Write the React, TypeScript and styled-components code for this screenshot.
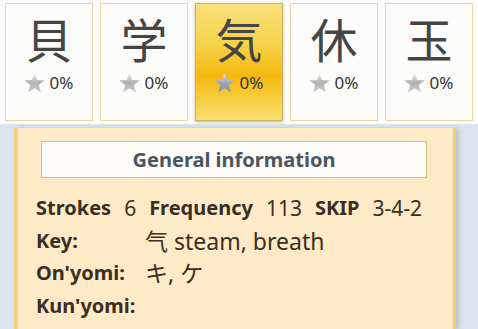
import React from 'react';
import styled, { createGlobalStyle } from 'styled-components';

// -- global --
const GlobalStyle = createGlobalStyle`
  html, body {
    margin: 0;
    padding: 0;
    background: #dbe5ef;
    font-family: "Noto Sans", "Noto Sans CJK JP", sans-serif;
    overflow: hidden;
  }
`;

type KanjiItem = { kanji: string; pct: string; selected?: boolean };

const kanjis: KanjiItem[] = [
  { kanji: '貝', pct: '0%' },
  { kanji: '学', pct: '0%' },
  { kanji: '気', pct: '0%', selected: true },
  { kanji: '休', pct: '0%' },
  { kanji: '玉', pct: '0%' },
];

const Star: React.FC<{ selected?: boolean; id: string }> = ({ selected, id }) => (
  <svg width="23" height="22" viewBox="0 0 24 23">
    <defs>
      <linearGradient id={id} x1="0" y1="0" x2="0" y2="1">
        <stop offset="0" stopColor={selected ? '#e8e8ee' : '#f2f2f2'} />
        <stop offset="0.5" stopColor={selected ? '#a0a4b4' : '#b2b2b2'} />
        <stop offset="1" stopColor={selected ? '#8a90a8' : '#cdcdcd'} />
      </linearGradient>
    </defs>
    <path
      d="M12 1 L14.8 8.4 L22.8 8.6 L16.5 13.6 L18.8 21.4 L12 16.9 L5.2 21.4 L7.5 13.6 L1.2 8.6 L9.2 8.4 Z"
      fill={`url(#${id})`}
    />
  </svg>
);

const App: React.FC = () => {
  return (
    <>
      <GlobalStyle />
      <TopStrip>
        {kanjis.map((k, i) => (
          <Tile key={k.kanji} selected={k.selected}>
            <KanjiChar>{k.kanji}</KanjiChar>
            <Progress>
              <Star selected={k.selected} id={`star-${i}`} />
              <Pct>{k.pct}</Pct>
            </Progress>
          </Tile>
        ))}
      </TopStrip>
      <Panel>
        <SectionHeader>General information</SectionHeader>
        <InfoRow>
          <Label>Strokes</Label>
          <Value>6</Value>
          <Label>Frequency</Label>
          <Value>113</Value>
          <Label>SKIP</Label>
          <Value>3-4-2</Value>
        </InfoRow>
        <InfoRow>
          <FixedLabel>Key:</FixedLabel>
          <Value wide>气 steam, breath</Value>
        </InfoRow>
        <InfoRow>
          <FixedLabel>On'yomi:</FixedLabel>
          <Value wide>キ, ケ</Value>
        </InfoRow>
        <InfoRow>
          <FixedLabel>Kun'yomi:</FixedLabel>
        </InfoRow>
      </Panel>
    </>
  );
};

// -- styled components --

const TopStrip = styled.div`
  display: flex;
  gap: 7px;
  padding: 3px 5px 3px 5px;
  background: #fdfdfd;
  height: 118px;
`;

const Tile = styled.div<{ selected?: boolean }>`
  width: 88px;
  box-sizing: border-box;
  display: flex;
  flex-direction: column;
  align-items: center;
  border: 1.5px solid ${(p) => (p.selected ? '#c9b26a' : '#e4d6a6')};
  background: ${(p) =>
    p.selected
      ? 'linear-gradient(to bottom, #f7e07a 0%, #f6d34a 35%, #f6b80e 62%, #f7cc3a 80%, #f7df74 100%)'
      : '#fcfcfb'};
  box-shadow: ${(p) => (p.selected ? '0 1px 3px rgba(140,110,40,0.5)' : 'none')};
`;

const KanjiChar = styled.div`
  font-family: "Noto Sans CJK JP", sans-serif;
  font-size: 47px;
  line-height: 54px;
  margin-top: 7px;
  color: #454545;
`;

const Progress = styled.div`
  display: flex;
  align-items: center;
  gap: 4px;
  margin-top: 7px;
  margin-left: -2px;
`;

const Pct = styled.span`
  font-size: 17px;
  line-height: 20px;
  color: #333;
`;

const Panel = styled.div`
  margin: 4px 0 0 14px;
  width: 442px;
  height: 201px;
  box-sizing: border-box;
  padding: 13px 0 0 18px;
  background: #feeac7;
  border-left: 4px solid #f3cf7e;
  border-right: 3px solid #efcb78;
  box-shadow: 3px 0 4px rgba(150, 130, 90, 0.35);
`;

const SectionHeader = styled.div`
  margin-left: 5px;
  width: 386px;
  height: 37px;
  box-sizing: border-box;
  display: flex;
  align-items: center;
  justify-content: center;
  background: #fdfcf8;
  border: 1.5px solid #d6c07c;
  font-size: 20px;
  font-weight: 700;
  color: #4b5561;
  margin-bottom: 14px;
`;

const InfoRow = styled.div`
  display: flex;
  align-items: center;
  height: 32.5px;
  line-height: 32px;
  font-size: 20px;
  color: #3a2e22;
`;

const Label = styled.span`
  font-weight: 700;
  margin-right: 13px;
`;

const FixedLabel = styled(Label)`
  width: 109px;
  margin-right: 0;
`;

const Value = styled.span<{ wide?: boolean }>`
  font-size: ${(p) => (p.wide ? '23px' : '21px')};
  margin-right: 13px;
`;

export default App;
